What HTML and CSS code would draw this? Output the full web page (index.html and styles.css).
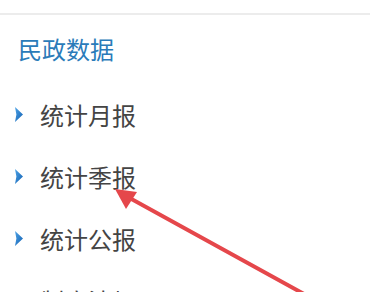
FILE: index.html
```html
<!DOCTYPE html>
<html lang="zh-CN">
<head>
    <meta charset="UTF-8">
    <meta name="viewport" content="width=device-width, initial-scale=1.0">
    <title>民政数据</title>
    <link rel="stylesheet" href="styles.css">
</head>
<body>
    <div class="topbar"></div>
    <div class="section-title">民政数据</div>
    <ul class="menu">
        <li><svg class="chevron" viewBox="0 0 8 15"><defs><linearGradient id="g" x1="0" y1="0" x2="1" y2="1"><stop offset="0" stop-color="#4ea3e6"/><stop offset="1" stop-color="#1260b2"/></linearGradient></defs><polygon points="0,0 8,7.5 0,15 1.4,7.5" fill="url(#g)"/></svg>统计月报</li>
        <li><svg class="chevron" viewBox="0 0 8 15"><polygon points="0,0 8,7.5 0,15 1.4,7.5" fill="url(#g)"/></svg>统计季报</li>
        <li><svg class="chevron" viewBox="0 0 8 15"><polygon points="0,0 8,7.5 0,15 1.4,7.5" fill="url(#g)"/></svg>统计公报</li>
        <li><svg class="chevron" viewBox="0 0 8 15"><polygon points="0,0 8,7.5 0,15 1.4,7.5" fill="url(#g)"/></svg>制度法规</li>
    </ul>

    <!-- annotation arrow -->
    <svg class="pointer" width="370" height="292" viewBox="0 0 370 292">
        <line x1="304" y1="294" x2="126" y2="196" stroke="#e5474b" stroke-width="4" stroke-linecap="round"/>
        <polygon points="115,189 137,192 126,209" fill="#e5474b"/>
    </svg>
</body>
</html>
```

FILE: styles.css
```css
body {
    margin: 0;
    background: #fff;
    font-family: "Noto Sans CJK SC", "Noto Sans", sans-serif;
    overflow: hidden;
    position: relative;
    height: 292px;
}

.topbar {
    height: 13px;
    border-bottom: 2px solid #ececec;
}

.section-title {
    color: #2a7bb9;
    font-size: 24px;
    line-height: 34px;
    padding: 17px 18px;
}

.menu {
    list-style: none;
    margin: 0;
    padding: 0 0 0 15px;
}

.menu li {
    display: flex;
    align-items: center;
    height: 62px;
    font-size: 24px;
    color: #444;
}

.chevron {
    width: 8px;
    height: 15px;
    margin-right: 17px;
}

.pointer {
    position: absolute;
    left: 0;
    top: 0;
}
```
